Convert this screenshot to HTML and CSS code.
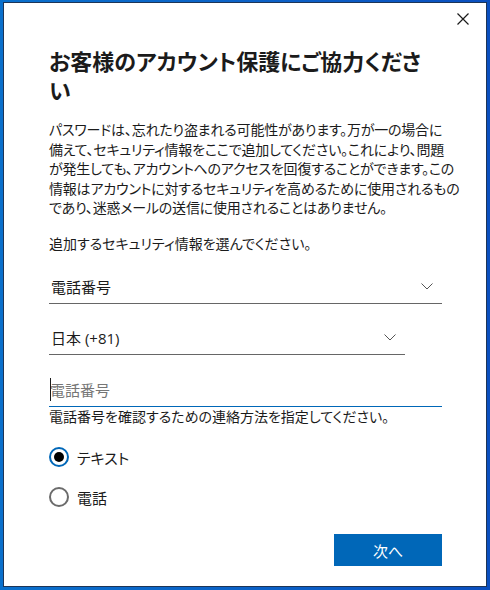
FILE: index.html
```html
<!DOCTYPE html>
<html lang="ja">
<head>
    <meta charset="UTF-8">
    <meta name="viewport" content="width=device-width, initial-scale=1.0">
    <title>アカウント保護</title>
    <link rel="stylesheet" href="styles.css">
</head>
<body>
    <div class="dialog">
        <div class="dialog-header">
            <button class="close-button" aria-label="閉じる">
                <svg width="12" height="12" viewBox="0 0 12 12">
                    <path d="M0.5 0.5 L11.5 11.5 M11.5 0.5 L0.5 11.5" stroke="#1b1b1b" stroke-width="1.2" fill="none"/>
                </svg>
            </button>
        </div>

        <div class="dialog-body">
            <h1 class="title">お客様のアカウント保護にご協力ください</h1>

            <p class="intro">パスワードは、忘れたり盗まれる可能性があります。万が一の場合に<br>備えて、セキュリティ情報をここで追加してください。これにより、問題<br>が発生しても、アカウントへのアクセスを回復することができます。この<br>情報はアカウントに対するセキュリティを高めるために使用されるもの<br>であり、迷惑メールの送信に使用されることはありません。</p>

            <p class="prompt">追加するセキュリティ情報を選んでください。</p>

            <!-- 種類の選択 -->
            <div class="select">
                <span>電話番号</span>
                <svg class="chevron" width="12" height="7" viewBox="0 0 12 7">
                    <path d="M0.5 0.5 L6 6 L11.5 0.5" stroke="#555" stroke-width="1" fill="none"/>
                </svg>
            </div>

            <!-- 国コード -->
            <div class="select select-country">
                <span>日本 (+81)</span>
                <svg class="chevron" width="12" height="7" viewBox="0 0 12 7">
                    <path d="M0.5 0.5 L6 6 L11.5 0.5" stroke="#555" stroke-width="1" fill="none"/>
                </svg>
            </div>

            <div class="phone-field">
                <span class="placeholder">電話番号</span>
            </div>

            <p class="hint">電話番号を確認するための連絡方法を指定してください。</p>

            <div class="options">
                <label class="option">
                    <input type="radio" name="method" checked>
                    <span>テキスト</span>
                </label>
                <label class="option">
                    <input type="radio" name="method">
                    <span>電話</span>
                </label>
            </div>

            <div class="actions">
                <button class="next-button">次へ</button>
            </div>
        </div>
    </div>
</body>
</html>
```

FILE: styles.css
```css
body {
    margin: 0;
    padding: 2px 4px 4px 3px;
    background: linear-gradient(90deg, #0a70cc 0%, #0b5fc6 60%, #0a4fbf 100%);
    font-family: "Segoe UI", "Open Sans", "Noto Sans CJK JP", sans-serif;
    font-feature-settings: "palt";
    color: #1b1b1b;
}

.dialog {
    width: 482px;
    height: 583px;
    background-color: white;
    border: 1px solid #1d3557;
}

.dialog-header {
    display: flex;
    justify-content: flex-end;
    padding: 10px 17px 0 0;
}

.close-button {
    background: none;
    border: none;
    padding: 0;
    width: 12px;
    height: 12px;
    display: flex;
    cursor: pointer;
}

.dialog-body {
    padding: 0 44px 0 45px;
}

.title {
    margin: 21px 0 0;
    font-size: 22px;
    font-weight: bold;
    line-height: 29px;
    font-family: "Noto Sans CJK JP", sans-serif;
}

.intro {
    margin: 16px 0 0;
    font-size: 14px;
    line-height: 19.5px;
    letter-spacing: -0.2px;
    white-space: nowrap;
}

.prompt {
    margin: 16px 0 0;
    font-size: 14px;
    line-height: 19.5px;
}

.select {
    display: flex;
    align-items: center;
    justify-content: space-between;
    height: 32px;
    box-sizing: border-box;
    margin-top: 19px;
    padding: 0 9px 3px 2px;
    border-bottom: 1px solid #666;
    font-size: 15px;
}

.select-country {
    width: 356px;
}

.phone-field {
    display: flex;
    align-items: center;
    height: 32px;
    box-sizing: border-box;
    margin-top: 20px;
    padding-bottom: 3px;
    border-bottom: 1px solid #0067b8;
    font-size: 15px;
}

.placeholder {
    position: relative;
    color: #767676;
    padding-left: 1px;
}

/* curseur de saisie */
.placeholder::before {
    content: "";
    position: absolute;
    left: 1px;
    top: -1px;
    bottom: -1px;
    border-left: 1px solid #1b1b1b;
}

.hint {
    margin: 0;
    font-size: 14px;
    line-height: 20px;
}

.options {
    display: flex;
    flex-direction: column;
    gap: 20px;
    margin-top: 20px;
}

.option {
    display: flex;
    align-items: center;
    gap: 8px;
    font-size: 15px;
    height: 20px;
}

.option input {
    appearance: none;
    margin: 0;
    width: 20px;
    height: 20px;
    border-radius: 50%;
    border: 2px solid #6b6b6b;
    box-sizing: border-box;
    display: flex;
    align-items: center;
    justify-content: center;
}

.option input:checked {
    border-color: #0067b8;
}

.option input:checked::after {
    content: "";
    width: 10px;
    height: 10px;
    border-radius: 50%;
    background-color: #000;
}

.actions {
    display: flex;
    justify-content: flex-end;
    margin-top: 27px;
}

.next-button {
    width: 108px;
    height: 32px;
    border: none;
    background-color: #0067b8;
    color: white;
    font-family: inherit;
    font-size: 15px;
    cursor: pointer;
}
```
